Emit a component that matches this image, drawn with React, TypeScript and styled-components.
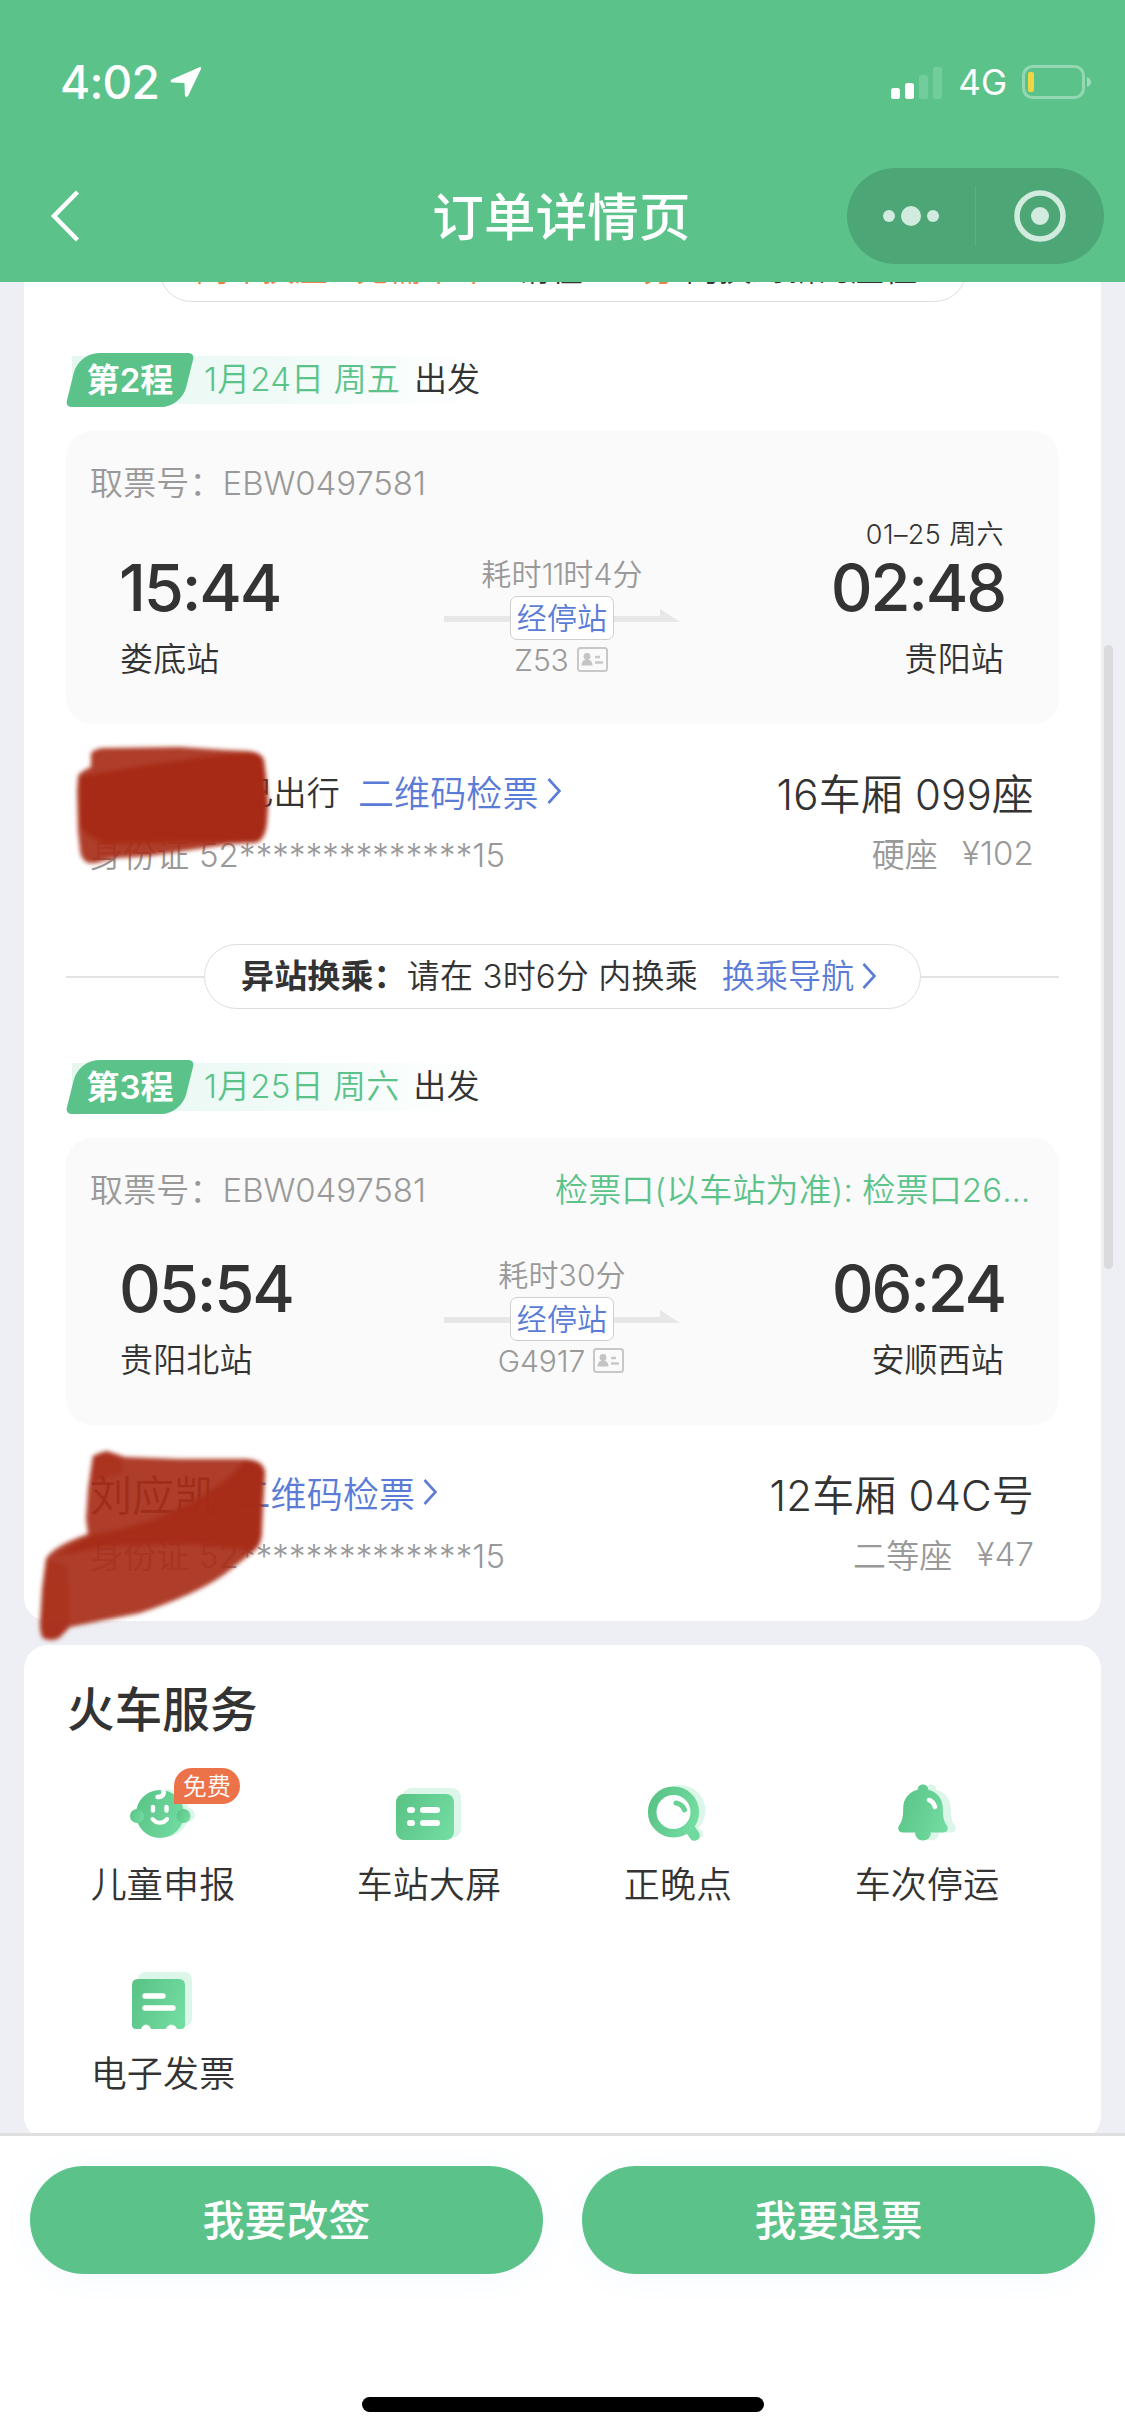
import React from 'react';
import styled, { createGlobalStyle, css } from 'styled-components';

const GREEN = '#5bc38a';
const INK = '#333333';
const MUTED = '#999999';
const BLUE = '#5b7cd6';

const GlobalStyle = createGlobalStyle`
  * { box-sizing: border-box; }
  body {
    margin: 0;
    font-family: Inter, "Noto Sans CJK SC", sans-serif;
    font-weight: 350;
    letter-spacing: 0.15px;
    color: ${INK};
  }
`;

const Screen = styled.div`
  width: 1125px;
  height: 2436px;
  display: flex;
  flex-direction: column;
  overflow: hidden;
  background: #edeff4;
  white-space: nowrap;
`;

const Header = styled.header`
  height: 282px;
  flex: none;
  background: ${GREEN};
  color: #fff;
`;

const StatusBar = styled.div`
  height: 132px;
  padding: 32px 33px 0 60px;
  display: flex;
  align-items: center;
  justify-content: space-between;
`;

const StatusSide = styled.div<{ $gap: number }>`
  display: flex;
  align-items: center;
  gap: ${(p) => p.$gap}px;
`;

const Clock = styled.span`
  font-size: 46px;
  font-weight: 550;
  line-height: 60px;
  letter-spacing: -0.8px;
`;

const Network = styled.span`
  font-size: 35px;
  font-weight: 420;
  line-height: 40px;
  letter-spacing: 0;
`;

const NavBar = styled.div`
  height: 150px;
  padding: 18px 21px 0 46px;
  display: grid;
  grid-template-columns: 256px 1fr 257px;
  align-items: center;
`;

const Title = styled.h1`
  margin: 2px 0 0;
  padding-right: 26px;
  text-align: center;
  font-size: 51.5px;
  font-weight: 500;
  line-height: 70px;
`;

const Capsule = styled.div`
  height: 96px;
  border-radius: 48px;
  background: #4da675;
  display: grid;
  grid-template-columns: 1fr 1px 1fr;
  align-items: center;
  justify-items: center;
`;

const CapsuleDivider = styled.i`
  width: 1px;
  height: 60px;
  background: #5bb083;
`;

const Content = styled.main`
  position: relative;
  flex: 1;
  min-height: 0;
  overflow: hidden;
  padding: 0 24px;
  display: flex;
  flex-direction: column;
  gap: 24px;
`;

const OrderCard = styled.section`
  flex: none;
  margin-top: -45px;
  padding: 0 42px 45px;
  border-radius: 0 0 24px 24px;
  background: #fff;
`;

const TransferRow = styled.div<{ $top: number; $bare?: boolean }>`
  margin-top: ${(p) => p.$top}px;
  height: 65px;
  display: flex;
  align-items: center;

  &::before,
  &::after {
    content: '';
    flex: 1;
    height: 2px;
    background: ${(p) => (p.$bare ? 'transparent' : '#e3e3e3')};
  }
`;

const TransferPill = styled.div<{ $width: number }>`
  width: ${(p) => p.$width}px;
  height: 65px;
  padding: 0 36px 2px;
  border: 1px solid #dedede;
  border-radius: 33px;
  display: flex;
  align-items: center;
  font-size: 33px;
  line-height: 40px;
`;

const Strong = styled.b`
  font-weight: 700;
`;

const Orange = styled.span`
  color: #ec7f45;
`;

const Link = styled.a<{ $size: number; $left: number }>`
  margin-left: ${(p) => p.$left}px;
  display: flex;
  align-items: center;
  gap: 8px;
  font-size: ${(p) => p.$size}px;
  color: ${BLUE};
`;

const LegHeader = styled.div`
  margin-top: 51px;
  height: 54px;
  display: flex;
  align-items: center;
  font-size: 33px;
  line-height: 46px;
`;

const LegTag = styled.span`
  position: relative;
  z-index: 1;
  width: 128px;
  height: 54px;
  display: flex;
  align-items: center;
  justify-content: center;
  color: #fff;
  font-weight: 600;

  &::before {
    content: '';
    position: absolute;
    z-index: -1;
    inset: 0 6px;
    border-radius: 20px 6px 20px 6px;
    background: ${GREEN};
    transform: skewX(-14deg);
  }
`;

const LegDate = styled.div`
  margin-left: -122px;
  height: 48px;
  padding-left: 132px;
  display: flex;
  gap: 14px;
  color: ${GREEN};
  background: linear-gradient(90deg, #e6f7f0, #f1fbf8 55%, #fff);
`;

const Dark = styled.span`
  color: ${INK};
`;

const Num = styled.span<{ $track?: number }>`
  letter-spacing: ${(p) => p.$track ?? -0.1}px;
`;

const TripBox = styled.div`
  margin-top: 24px;
  padding: 20px 25px 45px 24px;
  border-radius: 26px;
  background: #fafafa;
`;

const TicketRow = styled.div`
  height: 60px;
  margin-bottom: 2px;
  display: flex;
  align-items: center;
  justify-content: space-between;
  font-size: 33px;
  color: ${MUTED};
`;

const Gate = styled.span`
  width: 479px;
  overflow: hidden;
  text-overflow: ellipsis;
  color: ${GREEN};
`;

const Journey = styled.div<{ $height: number }>`
  height: ${(p) => p.$height}px;
  padding: 0 30px;
  display: grid;
  grid-template-columns: 1fr 236px 1fr;
  align-items: end;
`;

const Stop = styled.div<{ $end?: boolean }>`
  display: flex;
  flex-direction: column;
  align-items: ${(p) => (p.$end ? 'flex-end' : 'flex-start')};
  font-size: 33px;
  line-height: 40px;
`;

const StopDate = styled.span`
  font-size: 27px;
  line-height: 42px;
  letter-spacing: 0.4px;
`;

const StopTime = styled.span`
  margin: 0 -1px 19px;
  font-size: 65px;
  font-weight: 540;
  line-height: 64px;
  letter-spacing: -2.2px;
`;

const Middle = styled.div`
  display: flex;
  flex-direction: column;
  align-items: center;
  font-size: 30px;
  line-height: 40px;
  color: ${MUTED};
`;

const Arrow = styled.div`
  position: relative;
  width: 236px;
  height: 44px;
  margin-top: 2px;
  display: flex;
  justify-content: center;
`;

const ArrowShape = styled.svg`
  position: absolute;
  left: 0;
  top: 0;
`;

const StopsButton = styled.span`
  position: relative;
  width: 104px;
  height: 44px;
  border: 1px solid #cfcfcf;
  border-radius: 7px;
  background: #fff;
  text-align: center;
  line-height: 43px;
  color: ${BLUE};
`;

const TrainNo = styled.div`
  height: 39px;
  padding-right: 2px;
  display: flex;
  align-items: center;
  gap: 8px;
`;

const Passenger = styled.div`
  position: relative;
  padding: 37px 25px 2px 24px;
`;

const PassengerLine = styled.div<{ $main?: boolean }>`
  height: ${(p) => (p.$main ? 60 : 40)}px;
  margin-top: ${(p) => (p.$main ? 0 : 12)}px;
  display: flex;
  align-items: center;
  justify-content: space-between;
  font-size: 33px;
  ${(p) =>
    !p.$main &&
    css`
      color: ${MUTED};
    `}
`;

const Inline = styled.div<{ $gap?: number }>`
  display: flex;
  align-items: center;
  gap: ${(p) => p.$gap ?? 0}px;
`;

const Big = styled.span`
  font-size: 42px;
`;

const Travelled = styled.span`
  margin-left: 24px;
`;

const Scribble = styled.svg<{ $left: number; $top: number }>`
  position: absolute;
  left: ${(p) => p.$left}px;
  top: ${(p) => p.$top}px;
  overflow: visible;
`;

const ServiceCard = styled.section`
  flex: none;
  height: 495px;
  border-radius: 24px;
  background: #fff;
`;

const ServiceTitle = styled.h2`
  margin: 0;
  padding: 31px 0 0 43px;
  font-size: 47.5px;
  font-weight: 500;
  line-height: 68px;
`;

const ServiceGrid = styled.div`
  padding-top: 38px;
  display: grid;
  grid-template-columns: 278px 254px 244px 254px;
  row-gap: 69px;
`;

const Service = styled.div`
  height: 120px;
  display: flex;
  flex-direction: column;
  align-items: center;
  gap: 15px;
  font-size: 36px;
  line-height: 44px;
`;

const ServiceIcon = styled.div`
  position: relative;
  width: 66px;
  height: 66px;

  svg { display: block; }
`;

const Badge = styled.span`
  position: absolute;
  left: 44px;
  top: -14px;
  width: 66px;
  height: 36px;
  border-radius: 18px 18px 18px 0;
  background: #ec7249;
  color: #fff;
  font-size: 24px;
  line-height: 37px;
  text-align: center;
`;

const ScrollThumb = styled.i`
  position: absolute;
  left: 1104px;
  top: 363px;
  width: 9px;
  height: 624px;
  border-radius: 5px;
  background: #dbdbde;
`;

const Footer = styled.footer`
  height: 303px;
  flex: none;
  border-top: 3px solid #dfdfdf;
  padding: 30px 30px 24px;
  display: flex;
  flex-direction: column;
  align-items: center;
  justify-content: space-between;
  background: #fff;
`;

const Actions = styled.div`
  width: 100%;
  display: grid;
  grid-template-columns: 1fr 1fr;
  gap: 39px;
`;

const Action = styled.button`
  height: 108px;
  padding: 0 0 6px;
  border: 0;
  border-radius: 54px;
  background: ${GREEN};
  box-shadow: 0 4px 30px rgba(91, 160, 240, 0.06);
  color: #fff;
  font: 500 42px Inter, 'Noto Sans CJK SC', sans-serif;
`;

const HomeIndicator = styled.i`
  width: 402px;
  height: 15px;
  border-radius: 8px;
  background: #000;
`;

const Chevron = ({ h = 28 }: { h?: number }) => (
  <svg width="14" height={h} viewBox="0 0 14 28" fill="none" stroke={BLUE} strokeWidth="2.6">
    <path d="M1.5 2 12.5 14 1.5 26" />
  </svg>
);

const IdCard = () => (
  <svg width="31" height="25" viewBox="0 0 31 25">
    <rect x="1" y="1" width="29" height="23" rx="2.5" fill="none" stroke="#c8c8c8" strokeWidth="2" />
    <circle cx="10" cy="9.500" r="3.400" fill="#c4c4c4" />
    <path d="M4.500 18.500c0-4 2.500-6 5.500-6s5.500 2 5.500 6z" fill="#c4c4c4" />
    <path d="M18 10h5M18 15.500h8" stroke="#c8c8c8" strokeWidth="2.400" />
  </svg>
);

interface TripProps {
  ticket: string;
  gate?: string;
  from: [string, string];
  to: [string, string];
  date?: React.ReactNode;
  cost: React.ReactNode;
  train: string;
  height: number;
}

const Trip = ({ ticket, gate, from, to, date, cost, train, height }: TripProps) => (
  <TripBox>
    <TicketRow>
      <span>
        取票号：<Num>{ticket}</Num>
      </span>
      {gate && <Gate>{gate}</Gate>}
    </TicketRow>
    <Journey $height={height}>
      <Stop>
        <StopTime>{from[0]}</StopTime>
        <span>{from[1]}</span>
      </Stop>
      <Middle>
        <span>{cost}</span>
        <Arrow>
          <ArrowShape width="236" height="44">
            <path d="M0 20H216V13L236 26H0Z" fill="#e7e7e7" />
          </ArrowShape>
          <StopsButton>经停站</StopsButton>
        </Arrow>
        <TrainNo>
          <Num>{train}</Num>
          <IdCard />
        </TrainNo>
      </Middle>
      <Stop $end>
        {date && <StopDate>{date}</StopDate>}
        <StopTime>{to[0]}</StopTime>
        <span>{to[1]}</span>
      </Stop>
    </Journey>
  </TripBox>
);

const Leg = ({ n, date }: { n: number; date: string }) => (
  <LegHeader>
    <LegTag>第{n}程</LegTag>
    <LegDate>
      <span>{date}</span>
      <Dark>出发</Dark>
    </LegDate>
  </LegHeader>
);

const Grad = ({ id }: { id: string }) => (
  <linearGradient id={id} x1="0" y1="0.3" x2="1" y2="0.7">
    <stop offset="0" stopColor="#5bc487" />
    <stop offset="1" stopColor="#72dca1" />
  </linearGradient>
);

const PALE = '#dcf7ea';

const ChildIcon = () => (
  <svg width="66" height="66" viewBox="0 0 66 66">
    <defs><Grad id="gc" /></defs>
    <g fill={PALE}>
      <circle cx="35" cy="31" r="24" />
      <circle cx="58" cy="33" r="7" />
    </g>
    <g fill="url(#gc)">
      <circle cx="30" cy="32" r="24" />
      <circle cx="7" cy="34" r="7" />
      <circle cx="53.500" cy="34" r="7" />
    </g>
    <g fill="none" stroke="#fff" strokeLinecap="round">
      <path d="M33 8c2 4-.500 7-5.500 7" strokeWidth="4.500" />
      <path d="M23 25v3.500M36.500 25v3.500" strokeWidth="4.400" />
      <path d="M22.500 37c4 5 11 5 14.500 0" strokeWidth="4" />
    </g>
  </svg>
);

const ScreenIcon = () => (
  <svg width="66" height="66" viewBox="0 0 66 66">
    <defs><Grad id="gs" /></defs>
    <rect x="6" y="6" width="59" height="50" rx="9" fill={PALE} />
    <rect x="0" y="12" width="58" height="46" rx="8" fill="url(#gs)" />
    <path d="M14 28h2M27 28h14M14 41h2M27 41h14" stroke="#fff" strokeWidth="6" strokeLinecap="round" />
  </svg>
);

const SearchIcon = () => (
  <svg width="66" height="66" viewBox="0 0 66 66">
    <defs><Grad id="gm" /></defs>
    <g fill={PALE}>
      <circle cx="35" cy="28.500" r="25.500" />
      <path d="M45 44 53 52" stroke={PALE} strokeWidth="10" strokeLinecap="round" />
    </g>
    <path d="M43 44 49.500 53.500" stroke="#70d99f" strokeWidth="10.500" strokeLinecap="round" />
    <circle cx="28.500" cy="30" r="21.300" fill="#fff" stroke="url(#gm)" strokeWidth="8.600" />
    <path d="M31 21c4 .500 7 3 8.500 7" fill="none" stroke="#68d196" strokeWidth="5" strokeLinecap="round" />
  </svg>
);

const BELL =
  'M29 2.500c3 0 5.300 2.200 5.300 5.200 9.200 2.300 14.500 9.300 14.500 18.300 0 8 .7 12.500 4 17.500 2.400 3.700 0 7-3.500 7H36.800c.2 4.500-3.300 8-7.800 8s-8-3.500-7.800-8H8.700c-3.500 0-5.900-3.300-3.500-7 3.300-5 4-9.500 4-17.500 0-9 5.300-16 14.500-18.300 0-3 2.300-5.200 5.300-5.200Z';

const BellIcon = () => (
  <svg width="66" height="66" viewBox="0 0 66 66">
    <defs><Grad id="gb" /></defs>
    <path d={BELL} fill={PALE} transform="translate(8 0)" />
    <path d={BELL} fill="url(#gb)" />
    <path d="M35 18c3 1 5 3.500 6 7" fill="none" stroke="#fff" strokeWidth="4.600" strokeLinecap="round" />
  </svg>
);

const InvoiceIcon = () => (
  <svg width="66" height="66" viewBox="0 0 66 66">
    <defs><Grad id="gi" /></defs>
    <rect x="8" y="1" width="54" height="54" rx="7" fill={PALE} />
    <path
      d="M8 8H49Q55 8 55 14V54Q55 58 51 58H47C45 52 38 52 36 58H21C19 52 13 52 11 58H6Q2 58 2 54V14Q2 8 8 8Z"
      fill="url(#gi)"
    />
    <path d="M15 25h18M15 37h28" stroke="#fff" strokeWidth="5.400" strokeLinecap="round" />
  </svg>
);

const services = [
  { label: '儿童申报', icon: <ChildIcon />, badge: '免费' },
  { label: '车站大屏', icon: <ScreenIcon /> },
  { label: '正晚点', icon: <SearchIcon /> },
  { label: '车次停运', icon: <BellIcon /> },
  { label: '电子发票', icon: <InvoiceIcon /> },
];

export default function App() {
  return (
    <Screen>
      <GlobalStyle />
      <Header>
        <StatusBar>
          <StatusSide $gap={11}>
            <Clock>4:02</Clock>
            <svg width="32" height="32" viewBox="0 0 32 32" fill="#fff">
              <path d="M29.500 1.200 2 13.200c-2 1-1.600 3.200.6 3.400l11.900.3.400 12c.2 2.200 2.400 2.600 3.400.6L31 3c.5-1.300-.2-2.200-1.500-1.800Z" />
            </svg>
          </StatusSide>
          <StatusSide $gap={15}>
            <svg width="52" height="33" viewBox="0 0 52 33" fill="#fff">
              <rect x="0" y="22" width="9" height="11" rx="2.500" />
              <rect x="14" y="17" width="9" height="16" rx="2.500" />
              <rect x="28" y="9" width="9" height="24" rx="2.500" opacity="0.150" />
              <rect x="42" y="1" width="9" height="32" rx="2.500" opacity="0.150" />
            </svg>
            <Network>4G</Network>
            <svg width="70" height="34" viewBox="0 0 70 34">
              <rect x="1.500" y="1.500" width="60" height="31" rx="9" fill="none" stroke="#fff" strokeOpacity="0.350" strokeWidth="3" />
              <path d="M65 12c3 1 4 3 4 5s-1 4-4 5Z" fill="#fff" opacity="0.400" />
              <rect x="6" y="7" width="6" height="20" rx="2" fill="#f2d543" />
            </svg>
          </StatusSide>
        </StatusBar>
        <NavBar>
          <svg width="40" height="54" viewBox="0 0 40 54" fill="none" stroke="#fff" strokeWidth="4.500">
            <path d="M31.500 3 8 27 31.500 51" />
          </svg>
          <Title>订单详情页</Title>
          <Capsule>
            <svg width="58" height="24" viewBox="0 0 58 24" fill="#d2ebdf">
              <circle cx="7" cy="12" r="6" />
              <circle cx="29" cy="12" r="10" />
              <circle cx="51" cy="12" r="6" />
            </svg>
            <CapsuleDivider />
            <svg width="54" height="54" viewBox="0 0 54 54">
              <circle cx="27" cy="27" r="23" fill="none" stroke="#d2ebdf" strokeWidth="5.500" />
              <circle cx="27" cy="27" r="9" fill="#d2ebdf" />
            </svg>
          </Capsule>
        </NavBar>
      </Header>

      <Content>
        <OrderCard>
          <TransferRow $top={0} $bare>
            <TransferPill $width={808}>
              <Orange>同车换座</Orange>&nbsp;&nbsp;&nbsp;<Orange>无需下车</Orange>&nbsp;&nbsp;&nbsp;请在&nbsp;
              <Orange>&nbsp;50分</Orange>&nbsp;内换到新的座位
            </TransferPill>
          </TransferRow>

          <Leg n={2} date="1月24日 周五" />
          <Trip
            ticket="EBW0497581"
            from={['15:44', '娄底站']}
            to={['02:48', '贵阳站']}
            date="01–25 周六"
            cost={<>耗时<Num $track={-1}>11</Num>时4分</>}
            train="Z53"
            height={166}
          />
          <Passenger>
            <PassengerLine $main>
              <Inline>
                <Big>刘应凯</Big>
                <Travelled>已出行</Travelled>
                <Link $size={36} $left={18}>二维码检票<Chevron /></Link>
              </Inline>
              <Big>16车厢 099座</Big>
            </PassengerLine>
            <PassengerLine>
              <span>身份证 52**************15</span>
              <Inline $gap={24}>
                <span>硬座</span>
                <span>¥102</span>
              </Inline>
            </PassengerLine>
            <Scribble $left={10} $top={21} width="194" height="122">
              <defs>
                <filter id="soft" x="-10%" y="-10%" width="120%" height="120%">
                  <feGaussianBlur stdDeviation="2.200" />
                </filter>
              </defs>
              <g filter="url(#soft)" fill="#a72b18">
                <path opacity="0.920" d="M15 8Q20 3 29 3L104 2 149 5 172 6Q186 7 188 16L190 31 192 56 191 76Q189 98 177 98L154 99 114 105 74 111 41 113 27 116Q17 120 10 117 4 112 4 104L2 86 1 46 2 31Q5 26 15 22Z" />
                <path d="M4 32 60 22 130 12 172 8Q186 7 188 16L192 56 191 76Q189 98 177 97L100 97 30 99Q8 90 4 80Z" />
              </g>
            </Scribble>
          </Passenger>

          <TransferRow $top={69}>
            <TransferPill $width={717}>
              <Strong>异站换乘：</Strong>
              <span>请在 3时6分 内换乘</span>
              <Link $size={33} $left={24}>换乘导航<Chevron /></Link>
            </TransferPill>
          </TransferRow>

          <Leg n={3} date="1月25日 周六" />
          <Trip
            ticket="EBW0497581"
            gate="检票口(以车站为准): 检票口26、检票口27"
            from={['05:54', '贵阳北站']}
            to={['06:24', '安顺西站']}
            cost="耗时30分"
            train="G4917"
            height={160}
          />
          <Passenger>
            <PassengerLine $main>
              <Inline>
                <Big>刘应凯</Big>
                <Link $size={36} $left={18}>二维码检票<Chevron /></Link>
              </Inline>
              <Big>12车厢 04C号</Big>
            </PassengerLine>
            <PassengerLine>
              <span>身份证 52**************15</span>
              <Inline $gap={24}>
                <span>二等座</span>
                <span>¥47</span>
              </Inline>
            </PassengerLine>
            <Scribble $left={-29} $top={21} width="232" height="200">
              <g filter="url(#soft)" fill="#a72b18">
                <path opacity="0.920" d="M56 10Q64 6 70 5L88 11 143 13 208 13Q226 14 228 26L226 58 225 88Q224 100 216 106L188 128Q160 148 103 167L33 181 22 192Q14 196 6 192 3 188 3 178L5 143 9 113Q16 100 51 88L49 73 51 43Z" />
                <path opacity="0.850" d="M51 90Q110 80 150 58 190 38 208 14 226 13 228 26L226 58 224 90Q222 101 216 104L150 98 70 100 20 110Z" />
                <path opacity="0.500" d="M56 10 70 5 84 11 86 26 60 34 52 42Z" />
                <path opacity="0.500" d="M9 113 30 120 32 150 32 181 22 192Q14 196 6 192L3 178Z" />
              </g>
            </Scribble>
          </Passenger>
        </OrderCard>

        <ServiceCard>
          <ServiceTitle>火车服务</ServiceTitle>
          <ServiceGrid>
            {services.map((s) => (
              <Service key={s.label}>
                <ServiceIcon>
                  {s.icon}
                  {s.badge && <Badge>{s.badge}</Badge>}
                </ServiceIcon>
                <span>{s.label}</span>
              </Service>
            ))}
          </ServiceGrid>
        </ServiceCard>
        <ScrollThumb />
      </Content>

      <Footer>
        <Actions>
          <Action>我要改签</Action>
          <Action>我要退票</Action>
        </Actions>
        <HomeIndicator />
      </Footer>
    </Screen>
  );
}
